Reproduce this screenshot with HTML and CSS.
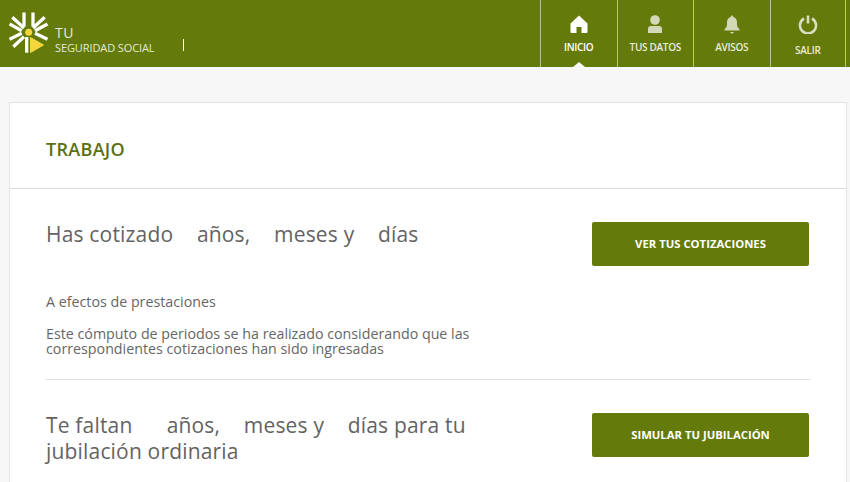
FILE: index.html
```html
<!DOCTYPE html>
<html lang="es">
<head>
    <meta charset="UTF-8">
    <meta name="viewport" content="width=device-width, initial-scale=1.0">
    <title>Tu Seguridad Social</title>
    <link rel="stylesheet" href="styles.css">
</head>
<body>

    <header class="topbar">
        <div class="brand">
            <svg class="brand-logo" width="40" height="42" viewBox="0 0 40 42">
                <g stroke="#fff" stroke-width="3.300" fill="none">
                    <path d="M15 .5V14.500M24 .5V14.500"/>
                    <path d="M3.300 5.300L15 16M.5 12l12.200 6.700"/>
                    <path d="M35.700 5.300L24 16M38.500 12l-12.500 6.700"/>
                    <path d="M.5 27.300l12.200-6M4.300 34.700L15 24.700"/>
                    <path d="M38.500 27.300l-12.500-6"/>
                    <path d="M17.700 25v15.700"/>
                </g>
                <circle cx="19.700" cy="20.300" r="3.500" fill="#f4d63c"/>
                <path d="M21.500 25.500L34.500 33l-13 7.500z" fill="#f4d63c" stroke="#f4d63c" stroke-linejoin="round"/>
            </svg>
            <div class="brand-text">
                <span class="brand-tu">TU</span>
                <span class="brand-name">SEGURIDAD SOCIAL</span>
            </div>
            <span class="brand-bar"></span>
        </div>
        <nav class="nav">
            <a class="nav-item active">
                <svg width="20" height="20" viewBox="0 0 20 20"><path d="M10 1.500L1.500 9.500V18q0 1 1 1h5v-6h5v6h5q1 0 1-1V9.500z" fill="#fff"/></svg>
                <span>INICIO</span>
            </a>
            <a class="nav-item">
                <svg width="20" height="20" viewBox="0 0 20 20"><circle cx="10" cy="6" r="4.800" fill="#d3d9b8"/><path d="M3 19v-4q0-3 3-3h8q3 0 3 3v4z" fill="#d3d9b8"/></svg>
                <span>TUS DATOS</span>
            </a>
            <a class="nav-item">
                <svg width="20" height="20" viewBox="0 0 20 20"><path d="M10 1.500q1.300 0 1.300 1.400Q15 4 15 8.500v2.500q0 2 2.500 4.500v1h-15v-1Q5 13 5 11V8.500Q5 4 8.700 2.900 8.700 1.500 10 1.500z M8.200 18h3.600q-.4 1.500-1.800 1.500T8.200 18z" fill="#d3d9b8"/></svg>
                <span>AVISOS</span>
            </a>
            <a class="nav-item exit">
                <svg width="20" height="20" viewBox="0 0 20 20" fill="none" stroke="#d8dec0" stroke-width="2.600"><path d="M6 4.500a8 8 0 1 0 8 0"/><path d="M10 1.500v8"/></svg>
                <span>SALIR</span>
            </a>
        </nav>
    </header>

    <main class="card">
        <h2 class="card-title">TRABAJO</h2>

        <section class="block block-first">
            <div class="block-text">
                <h3>Has cotizado <span class="gap"></span>años, <span class="gap"></span>meses y <span class="gap"></span>días</h3>
                <p class="note">A efectos de prestaciones</p>
                <p class="note">Este cómputo de periodos se ha realizado considerando que las correspondientes cotizaciones han sido ingresadas</p>
            </div>
            <a class="btn">VER TUS COTIZACIONES</a>
        </section>

        <section class="block block-second">
            <div class="block-text">
                <h3>Te faltan <span class="gap gap-wide"></span>años, <span class="gap"></span>meses y <span class="gap"></span>días para tu<br>jubilación ordinaria</h3>
            </div>
            <a class="btn">SIMULAR TU JUBILACIÓN</a>
        </section>
    </main>

</body>
</html>
```

FILE: styles.css
```css
html, body {
    height: 100%;
    overflow: hidden;
}
body {
    margin: 0;
    background-color: #f7f7f7;
    font-family: "Open Sans", sans-serif;
    color: #666;
}
.topbar {
    display: flex;
    justify-content: space-between;
    height: 67px;
    background-color: #647a0b;
}
.brand {
    display: flex;
    align-items: flex-start;
    padding: 12px 0 0 9px;
}
.brand-logo {
    flex: none;
}
.brand-text {
    display: flex;
    flex-direction: column;
    margin: 13px 0 0 6px;
    color: #e6ebd2;
}
.brand-tu {
    font-size: 14px;
    line-height: 16px;
    letter-spacing: 0.5px;
}
.brand-name {
    font-size: 11px;
    line-height: 14px;
    letter-spacing: -0.1px;
    width: 100px;
    white-space: nowrap;
}
.brand-bar {
    width: 1px;
    height: 12px;
    margin: 27px 0 0 28px;
    background-color: #fff;
}
.nav {
    display: flex;
    padding-right: 4px;
}
.nav-item {
    position: relative;
    display: flex;
    flex-direction: column;
    align-items: center;
    box-sizing: border-box;
    width: 76.500px;
    padding-top: 14px;
    border-left: 1px solid #b6c38a;
    color: #e8ecd6;
    font-size: 10px;
    font-weight: 600;
    letter-spacing: -0.3px;
}
.nav-item span {
    margin-top: 6px;
    line-height: 14px;
}
.nav-item.exit {
    border-right: 1px solid #b6c38a;
}
.nav-item.exit span {
    margin-top: 9px;
}
.nav-item.active {
    color: #fff;
}
.nav-item.active::after {
    content: "";
    position: absolute;
    bottom: 0;
    left: 50%;
    margin-left: -6px;
    border-left: 6px solid transparent;
    border-right: 6px solid transparent;
    border-bottom: 5px solid #f7f7f7;
}
.card {
    margin: 35px 3px 0 9px;
    background-color: #fff;
    border: 1px solid #e3e3e3;
    border-bottom: none;
    height: 400px;
}
.card-title {
    margin: 0;
    padding: 0 36px;
    height: 85px;
    line-height: 93px;
    border-bottom: 1px solid #d9d9d9;
    color: #5a7012;
    font-size: 18px;
    font-weight: 600;
    letter-spacing: 0.3px;
}
.block {
    display: flex;
    justify-content: space-between;
    margin: 0 36px;
}
.block-first {
    padding-top: 32px;
    height: 158px;
    border-bottom: 1px solid #ddd;
}
.block-second {
    padding-top: 32px;
}
.block-text {
    width: 440px;
}
.block-text h3 {
    margin: 0;
    color: #636363;
    font-size: 21px;
    font-weight: 400;
    line-height: 26px;
    letter-spacing: 0.18px;
    white-space: nowrap;
}
.gap {
    display: inline-block;
    width: 18px;
}
.gap-wide {
    width: 28.500px;
}
.note {
    margin: 0;
    font-size: 14.250px;
    line-height: 15px;
}
h3 + .note {
    margin-top: 47px;
    margin-bottom: 17px;
}
.btn {
    flex: none;
    width: 217px;
    height: 44px;
    margin: 1px 1px 0 0;
    background-color: #647a0b;
    border-radius: 2px;
    color: #fff;
    font-size: 11.300px;
    font-weight: 700;
    line-height: 44px;
    text-align: center;
}
```
